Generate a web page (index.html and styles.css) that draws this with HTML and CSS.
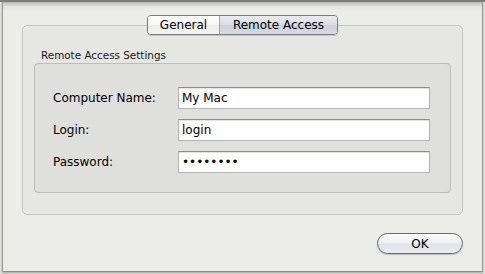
FILE: index.html
```html
<!DOCTYPE html>
<html lang="en">
<head>
    <meta charset="UTF-8">
    <title>Preferences</title>
    <link rel="stylesheet" href="styles.css">
</head>
<body>
    <div class="titlebar"></div>

    <div class="sheet">
        <div class="tabview">
            <div class="tabs">
                <div class="segmented">
                    <span class="tab">General</span>
                    <span class="tab selected">Remote Access</span>
                </div>
            </div>

            <div class="tabbox">
                <div class="groupTitle">Remote Access Settings</div>
                <div class="group">
                    <div class="row">
                        <label for="compName">Computer Name:</label>
                        <input type="text" id="compName" value="My Mac">
                    </div>
                    <div class="row">
                        <label for="login">Login:</label>
                        <input type="text" id="login" value="login">
                    </div>
                    <div class="row">
                        <label for="pass">Password:</label>
                        <input type="password" id="pass" value="password">
                    </div>
                </div>
            </div>
        </div>

        <!-- Bottom button row -->
        <div class="buttons">
            <button class="okBtn">OK</button>
        </div>
    </div>
</body>
</html>
```

FILE: styles.css
```css
* {
    box-sizing: border-box;
}

body, html {
    margin: 0;
    padding: 0;
    width: 485px;
    height: 274px;
    overflow: hidden;
    background-color: #e4e4e2;
    font-family: "DejaVu Sans", sans-serif;
    color: #000;
}

/* Bottom of the parent window toolbar */
.titlebar {
    height: 2px;
    background: #7c7c7c;
}

/* The sheet dropping out of the window */
.sheet {
    margin-left: 2px;
    width: 481px;
    height: 270px;
    padding: 13px 19px 0 19px;
    background-color: #ecece9;
    border-left: 1px solid #9a9a9a;
    border-right: 1px solid #9a9a9a;
    border-bottom: 1px solid #8a8a8a;
    box-shadow: inset 0 6px 6px -5px rgba(0, 0, 0, 0.35), 0 1px 2px rgba(0, 0, 0, 0.3);
}

/* Segmented tab control */
.tabs {
    display: flex;
    justify-content: center;
    position: relative;
    z-index: 1;
    margin-bottom: -10px;
}

.segmented {
    display: flex;
    height: 20px;
    border: 1px solid #7a7a7a;
    border-radius: 4px;
    overflow: hidden;
    box-shadow: 0 1px 1px rgba(0, 0, 0, 0.15);
}

.tab {
    font-size: 12px;
    line-height: 18px;
    text-align: center;
    background: linear-gradient(#ffffff, #f6f6f6 50%, #ececec 51%, #f4f4f4);
}

.tab:first-child {
    width: 72px;
    border-right: 1px solid #a4a4a4;
}

.tab.selected {
    width: 117px;
    background: linear-gradient(#e9ebf1, #d9dde6 50%, #ccd1dc 51%, #d6dae3);
}

/* Tab content box */
.tabbox {
    height: 190px;
    padding: 22px 11px 21px 11px;
    background-color: #e6e6e3;
    border: 1px solid #c6c6c3;
    border-radius: 5px;
}

.groupTitle {
    font-size: 10.4px;
    line-height: 14px;
    padding-left: 7px;
    color: #1a1a1a;
}

.group {
    margin-top: 1px;
    display: flex;
    flex-direction: column;
    gap: 10px;
    padding: 23px 20px 19px 18px;
    background-color: #dfdfdd;
    border: 1px solid #bdbdbb;
    border-radius: 4px;
}

.row {
    display: flex;
    align-items: center;
    height: 22px;
}

.row label {
    width: 125px;
    font-size: 12px;
}

.row input {
    flex: 1;
    height: 22px;
    margin: 0;
    padding: 0 3px;
    font-family: "DejaVu Sans", sans-serif;
    font-size: 12px;
    color: #000;
    background: #fff;
    border: 1px solid #b4b4b4;
    border-top-color: #8c8c8c;
    border-radius: 0;
    box-shadow: inset 0 1px 0 #e4e4e4;
}

.row input:focus {
    outline: none;
}

/* OK button */
.buttons {
    display: flex;
    justify-content: flex-end;
    margin-top: 18px;
}

.okBtn {
    width: 86px;
    height: 21px;
    padding: 0;
    font-family: "DejaVu Sans", sans-serif;
    font-size: 12px;
    color: #000;
    border: 1px solid #6a6a6a;
    border-radius: 11px;
    background: linear-gradient(#fbfbfc, #eef0f3 45%, #dfe2e8 55%, #e9ecf1);
    box-shadow: 0 1px 1px rgba(0, 0, 0, 0.2);
}
```
